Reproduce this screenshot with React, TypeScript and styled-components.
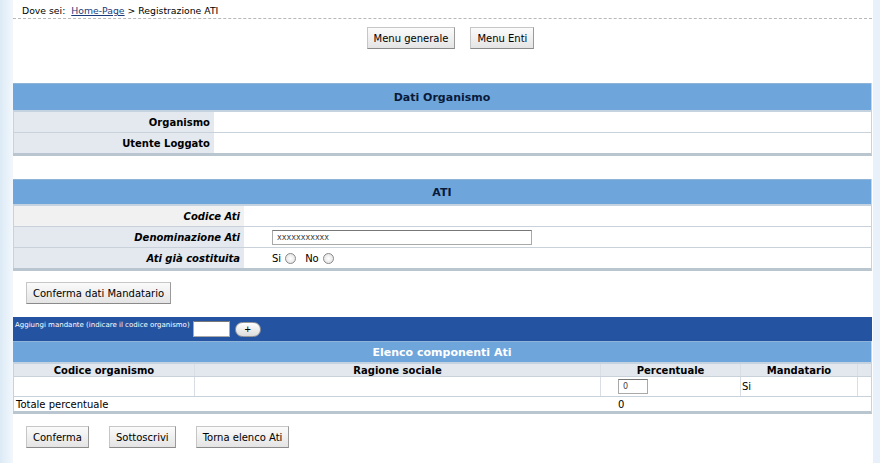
import React from 'react'
import styled, { createGlobalStyle } from 'styled-components'

const GlobalStyle = createGlobalStyle`
  html, body {
    margin: 0;
    padding: 0;
    background: #fff;
  }
  body {
    font-family: Verdana, "DejaVu Sans", sans-serif;
    font-size: 11px;
    color: #000;
  }
`

const Page = styled.div`
  display: flex;
  min-height: 463px;
  background: linear-gradient(to right, #dceaf6 0px, #f2f7fc 13px, #fff 13px, #fff 873px, #e8f1f9 873px, #e8f1f9 100%);
`

const Content = styled.div`
  flex: 1;
  margin: 0 8px 0 13px;
  background: #fff;
  display: flex;
  flex-direction: column;
`

const Breadcrumb = styled.div`
  height: 19px;
  box-sizing: border-box;
  padding: 5px 0 0 9px;
  font-size: 9.3px;
  line-height: 12px;
  border-bottom: 1px dashed #b8b8b8;
  a {
    color: #1a3a7a;
    text-decoration: underline;
    margin-left: 3px;
  }
`

const ButtonRow = styled.div<{ $center?: boolean; $gap?: number; $top: number; $bottom: number; $left?: number }>`
  display: flex;
  justify-content: ${p => (p.$center ? 'center' : 'flex-start')};
  gap: ${p => p.$gap ?? 15}px;
  padding: ${p => p.$top}px 0 ${p => p.$bottom}px ${p => p.$left ?? 13}px;
`

const Button = styled.button`
  font-family: Verdana, "DejaVu Sans", sans-serif;
  font-size: 10px;
  height: 22px;
  padding: 0 6px;
  background: linear-gradient(#fbfbfb, #e4e4e4);
  border: 1px solid #c6c6c6;
  border-right-color: #9a9a9a;
  border-bottom-color: #8a8a8a;
  border-radius: 0;
  color: #000;
`

const Panel = styled.div`
  display: flex;
  flex-direction: column;
  border-bottom: 3px solid #b9c6cf;
  border-right: 1px solid #c9d3da;
`

const PanelTitle = styled.div<{ $white?: boolean; $h: number }>`
  height: ${p => p.$h}px;
  display: flex;
  align-items: center;
  justify-content: center;
  background: #6ea6dc;
  color: ${p => (p.$white ? '#fff' : '#0a1a3a')};
  font-weight: bold;
  font-size: 11px;
  border-top: 1px solid #8fb4d8;
  border-bottom: 2px solid #c4d3df;
`

const FormRow = styled.div<{ $label: number }>`
  display: grid;
  grid-template-columns: ${p => p.$label}px 1fr;
  border-bottom: 1px solid #c9d2da;
  height: 20px;
  border-left: 1px solid #c9d2da;
  &:last-child {
    border-bottom: none;
  }
`

const Label = styled.div<{ $italic?: boolean; $alt?: boolean }>`
  background: ${p => (p.$alt ? '#f1f1f1' : '#e3e9ef')};
  display: flex;
  align-items: center;
  justify-content: flex-end;
  padding-right: 4px;
  font-weight: bold;
  font-style: ${p => (p.$italic ? 'italic' : 'normal')};
  font-size: 10px;
`

const Value = styled.div`
  background: #fff;
  display: flex;
  align-items: center;
  padding-left: 28px;
  gap: 4px;
  font-size: 10px;
`

const TextInput = styled.input<{ $w: number; $h?: number }>`
  width: ${p => p.$w}px;
  height: ${p => p.$h ?? 15}px;
  box-sizing: border-box;
  border: 1px solid #a9a9a9;
  border-top-color: #777;
  font-family: Verdana, "DejaVu Sans", sans-serif;
  font-size: 8px;
  padding: 0 4px;
  color: #444;
  background: #fff;
`

const Radio = styled.span`
  display: inline-block;
  width: 9px;
  height: 9px;
  border-radius: 50%;
  border: 1px solid #888;
  background: radial-gradient(#fff, #ddd);
  margin-right: 5px;
`

const Spacer = styled.div<{ $h: number }>`
  height: ${p => p.$h}px;
`

const AddBar = styled.div`
  height: 24px;
  background: #2453a2;
  display: flex;
  align-items: center;
  gap: 3px;
  padding-left: 2px;
  color: #fff;
  font-size: 7px;
  span {
    align-self: flex-start;
    margin-top: 4px;
  }
`

const PlusButton = styled.button`
  width: 26px;
  height: 15px;
  border-radius: 8px;
  border: 1px solid #999;
  background: linear-gradient(#fff, #dcdcdc);
  font-size: 11px;
  line-height: 11px;
  padding: 0;
  margin-left: 2px;
  color: #000;
`

const ListTable = styled.div`
  display: flex;
  flex-direction: column;
  border-bottom: 3px solid #b9c6cf;
  border-right: 1px solid #c9d3da;
`

const Grid = styled.div<{ $head?: boolean }>`
  display: grid;
  grid-template-columns: 181px 406px 140px 117px 1fr;
  height: ${p => (p.$head ? 12 : 19)}px;
  background: ${p => (p.$head ? '#e2e8ee' : '#fff')};
  border-left: 1px solid #c9d2da;
  border-bottom: 1px solid #c9d2da;
`

const Cell = styled.div<{ $head?: boolean; $center?: boolean; $pad?: number }>`
  display: flex;
  align-items: center;
  justify-content: ${p => (p.$center ? 'center' : 'flex-start')};
  padding-left: ${p => p.$pad ?? 0}px;
  font-weight: ${p => (p.$head ? 'bold' : 'normal')};
  font-size: 10px;
  border-right: 1px solid #d8dee4;
  &:last-child {
    border-right: none;
  }
`

const TotalRow = styled.div`
  display: grid;
  grid-template-columns: 602px 1fr;
  height: 14px;
  align-items: center;
  font-size: 10px;
  border-left: 1px solid #c9d2da;
  padding-left: 2px;
`

export default function App() {
  return (
    <>
      <GlobalStyle />
      <Page>
        <Content>
          <Breadcrumb>
            Dove sei: <a href="#">Home-Page</a> &gt; Registrazione ATI
          </Breadcrumb>
          <ButtonRow $center $top={8} $bottom={34} $left={16}>
            <Button>Menu generale</Button>
            <Button>Menu Enti</Button>
          </ButtonRow>

          <Panel>
            <PanelTitle $h={26}>Dati Organismo</PanelTitle>
            <FormRow $label={200}>
              <Label>Organismo</Label>
              <Value />
            </FormRow>
            <FormRow $label={200}>
              <Label>Utente Loggato</Label>
              <Value />
            </FormRow>
          </Panel>

          <Spacer $h={23} />

          <Panel>
            <PanelTitle $h={24}>ATI</PanelTitle>
            <FormRow $label={230}>
              <Label $italic $alt>Codice Ati</Label>
              <Value />
            </FormRow>
            <FormRow $label={230}>
              <Label $italic>Denominazione Ati</Label>
              <Value>
                <TextInput $w={260} defaultValue="xxxxxxxxxxx" />
              </Value>
            </FormRow>
            <FormRow $label={230}>
              <Label $italic>Ati già costituita</Label>
              <Value>
                Si <Radio /> No <Radio />
              </Value>
            </FormRow>
          </Panel>

          <ButtonRow $top={11} $bottom={13}>
            <Button>Conferma dati Mandatario</Button>
          </ButtonRow>

          <AddBar>
            <span>Aggiungi mandante (indicare il codice organismo)</span>
            <TextInput $w={37} $h={16} />
            <PlusButton>+</PlusButton>
          </AddBar>

          <ListTable>
            <PanelTitle $h={20} $white>Elenco componenti Ati</PanelTitle>
            <Grid $head>
              <Cell $head $center>Codice organismo</Cell>
              <Cell $head $center>Ragione sociale</Cell>
              <Cell $head $center>Percentuale</Cell>
              <Cell $head $center>Mandatario</Cell>
              <Cell />
            </Grid>
            <Grid>
              <Cell />
              <Cell />
              <Cell $pad={17}>
                <TextInput $w={30} defaultValue="0" />
              </Cell>
              <Cell $pad={1}>Si</Cell>
              <Cell />
            </Grid>
            <TotalRow>
              <span>Totale percentuale</span>
              <span>0</span>
            </TotalRow>
          </ListTable>

          <ButtonRow $top={12} $bottom={16} $gap={20}>
            <Button>Conferma</Button>
            <Button>Sottoscrivi</Button>
            <Button>Torna elenco Ati</Button>
          </ButtonRow>
        </Content>
      </Page>
    </>
  )
}
